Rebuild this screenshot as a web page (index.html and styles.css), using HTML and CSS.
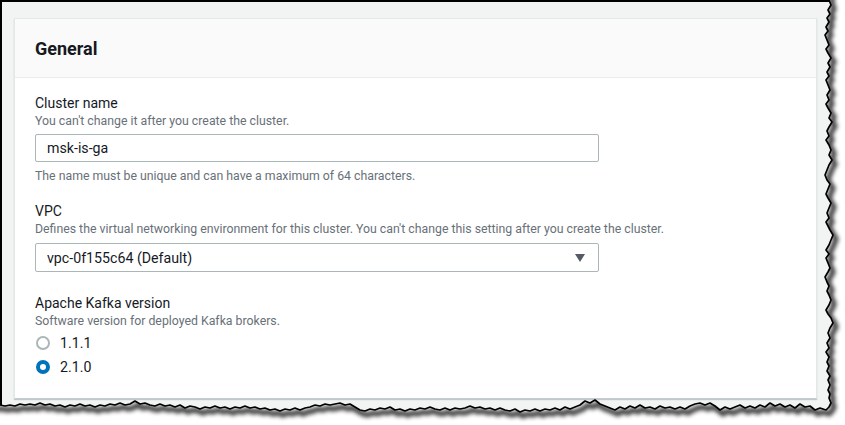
FILE: index.html
```html
<!DOCTYPE html>
<html>
<head>
<meta charset="utf-8">
<link rel="stylesheet" href="styles.css">
</head>
<body>
<div class="shot">
  <section class="card">
    <header class="card-header"><h2>General</h2></header>
    <div class="card-body">
      <div class="field">
        <div class="label">Cluster name</div>
        <div class="desc">You can't change it after you create the cluster.</div>
        <div class="input">msk-is-ga</div>
        <div class="desc constraint">The name must be unique and can have a maximum of 64 characters.</div>
      </div>
      <div class="field">
        <div class="label">VPC</div>
        <div class="desc">Defines the virtual networking environment for this cluster. You can't change this setting after you create the cluster.</div>
        <div class="input select">
          <span>vpc-0f155c64 (Default)</span>
          <svg class="caret" width="10" height="8" viewBox="0 0 10 8"><path d="M0 0 H10 L5 8 Z" fill="#545b64"/></svg>
        </div>
      </div>
      <div class="field version">
        <div class="label">Apache Kafka version</div>
        <div class="desc">Software version for deployed Kafka brokers.</div>
        <div class="radios">
          <div class="radio"><span class="dot"></span><span>1.1.1</span></div>
          <div class="radio"><span class="dot on"></span><span>2.1.0</span></div>
        </div>
      </div>
    </div>
  </section>
</div>
<svg class="torn" width="845" height="425" viewBox="0 0 845 425">
  <defs>
    <path id="edge" d="M829,-20 L829,0 L831,5 L828,10 L830,14 L827,18 L829,22 L826,27 L828,31 L825,35 L827,40 L829,45 L826,49 L828,53 L831,58 L828,63 L830,67 L827,72 L829,76 L826,80 L828,85 L830,90 L827,95 L829,100 L826,104 L828,108 L831,113 L829,118 L832,122 L829,127 L827,131 L829,136 L826,140 L829,145 L831,150 L829,155 L832,160 L829,165 L827,170 L825,175 L827,180 L830,184 L828,189 L826,194 L828,198 L831,203 L829,208 L827,213 L829,218 L826,222 L828,226 L830,230 L833,235 L831,240 L829,245 L826,250 L829,254 L826,258 L828,263 L830,268 L828,272 L825,277 L827,282 L829,286 L827,291 L829,295 L831,300 L829,305 L826,310 L828,314 L831,318 L833,323 L830,328 L828,333 L830,338 L827,343 L829,348 L826,352 L829,357 L827,362 L829,366 L827,371 L830,376 L828,380 L830,385 L828,390 L830,394 L829,398 L831,403 L829,407 L826,410 L820,408 L815,410 L810,406 L805,407 L800,404 L795,408 L790,405 L785,407 L780,404 L775,406 L770,403 L765,407 L760,405 L755,408 L750,406 L745,408 L740,405 L735,407 L730,409 L725,407 L720,410 L715,406 L710,403 L705,405 L700,403 L695,404 L690,406 L685,409 L680,407 L675,409 L670,407 L665,408 L660,406 L655,409 L650,407 L645,408 L640,405 L635,408 L630,406 L625,409 L620,407 L615,410 L610,408 L605,406 L600,404 L595,400 L590,403 L585,401 L580,405 L575,407 L570,409 L565,407 L560,410 L555,408 L550,410 L545,409 L540,411 L535,409 L530,411 L525,410 L520,412 L515,409 L510,411 L505,410 L500,408 L495,410 L490,408 L485,409 L480,407 L475,408 L470,406 L465,408 L460,409 L455,408 L450,410 L445,408 L440,410 L435,409 L430,407 L425,409 L420,408 L415,410 L410,409 L405,411 L400,409 L395,410 L390,407 L385,409 L380,408 L375,410 L370,409 L365,411 L360,410 L355,407 L350,404 L345,405 L340,403 L335,404 L330,405 L325,404 L320,406 L315,405 L310,407 L305,408 L300,410 L295,408 L290,410 L285,409 L280,411 L275,409 L270,410 L265,408 L260,409 L255,407 L250,408 L245,406 L240,408 L235,407 L230,409 L225,407 L220,408 L215,406 L210,408 L205,407 L200,409 L195,407 L190,406 L185,408 L180,405 L175,407 L170,405 L165,406 L160,404 L155,406 L150,405 L145,403 L140,404 L135,401 L130,404 L125,405 L120,403 L115,405 L110,404 L105,406 L100,405 L95,407 L90,405 L85,406 L80,404 L75,406 L70,405 L65,407 L60,405 L55,406 L50,404 L45,405 L40,403 L35,405 L30,404 L25,405 L20,404 L15,406 L10,405 L5,406 L0,405 L-20,405 L-20,460 L880,460 L880,-20 Z"/>
    <clipPath id="outside"><use href="#edge"/></clipPath>
    <filter id="blur" x="-10%" y="-10%" width="120%" height="120%"><feGaussianBlur stdDeviation="2.2"/></filter>
  </defs>
  <use href="#edge" fill="#ffffff"/>
  <g clip-path="url(#outside)">
    <use href="#edge" fill="none" stroke="#000" stroke-opacity="0.8" stroke-width="5" filter="url(#blur)" transform="translate(3,4)"/>
  </g>
  <use href="#edge" fill="none" stroke="#000" stroke-width="1.7" stroke-linejoin="round"/>
</svg>
</body>
</html>
```
FILE: styles.css
```css
html, body {
  margin: 0;
  padding: 0;
  background: #ffffff;
}
body {
  position: relative;
  width: 845px;
  height: 425px;
  overflow: hidden;
  font-family: Roboto, "Open Sans", sans-serif;
  color: #16191f;
}
.shot {
  box-sizing: border-box;
  width: 845px;
  height: 425px;
  background: #f2f3f3;
  border-top: 2px solid #000;
  border-left: 2px solid #000;
  padding: 16px 0 0 12px;
}
.card {
  width: 801px;
  background: #ffffff;
  border: 1px solid #e4e7e7;
  border-bottom-color: #c3cccf;
  box-shadow: 0 1px 1px 0 rgba(0, 28, 36, 0.2);
}
.card-header {
  height: 58px;
  background: #fafafa;
  border-bottom: 1px solid #eaeded;
  display: flex;
  align-items: center;
  padding: 0 20px;
}
.card-header h2 {
  margin: 0;
  font-size: 18px;
  font-weight: 700;
  line-height: 22px;
  color: #16191f;
  padding-top: 1px;
}
.card-body {
  padding: 15px 20px 19px 20px;
  display: flex;
  flex-direction: column;
  gap: 17px;
}
.field {
  display: flex;
  flex-direction: column;
}
.field.version {
  margin-top: 4px;
}
.label {
  font-size: 14px;
  line-height: 20px;
  color: #16191f;
}
.desc {
  font-size: 12.3px;
  line-height: 16px;
  color: #687078;
}
.constraint {
  margin-top: 6px;
}
.input {
  box-sizing: border-box;
  margin-top: 5px;
  width: 564px;
  height: 28px;
  border: 1px solid #aab7b8;
  border-radius: 2px;
  padding: 0 11px;
  display: flex;
  align-items: center;
  font-size: 14.2px;
  color: #16191f;
}
.select {
  margin-top: 6px;
  height: 29px;
  justify-content: space-between;
  padding-right: 13px;
}
.caret {
  display: block;
}
.radios {
  margin-top: 2px;
  display: flex;
  flex-direction: column;
}
.radio {
  display: flex;
  align-items: center;
  gap: 10px;
  height: 24px;
  font-size: 14.2px;
  color: #16191f;
  padding-left: 1px;
}
.dot {
  box-sizing: border-box;
  width: 14px;
  height: 14px;
  border-radius: 50%;
  border: 2px solid #aab7b8;
  background: #fff;
}
.dot.on {
  border: 4px solid #0073bb;
}
.torn {
  position: absolute;
  left: 0;
  top: 0;
  pointer-events: none;
}
```
